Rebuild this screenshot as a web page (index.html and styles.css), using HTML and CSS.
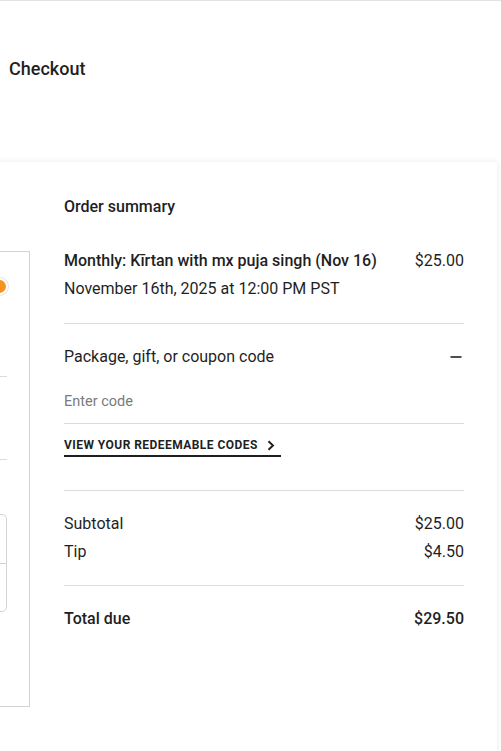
FILE: index.html
```html
<!DOCTYPE html>
<html lang="en">
<head>
<meta charset="utf-8">
<title>Checkout</title>
<link rel="stylesheet" href="styles.css">
</head>
<body>
<div class="topbar"></div>
<h1 class="page-title">Checkout</h1>
<main class="card">
  <section class="left-col">
    <div class="pay-box">
      <div class="radio-row"><span class="radio-dot"></span></div>
      <div class="pay-line pay-line-1"></div>
      <div class="pay-line pay-line-2"></div>
      <div class="card-input">
        <div class="card-input-top"></div>
        <div class="card-input-bottom"></div>
      </div>
    </div>
  </section>
  <section class="summary">
    <h2 class="summary-title">Order summary</h2>
    <div class="item">
      <div class="item-row">
        <span class="item-name">Monthly: Kīrtan with mx puja singh (Nov 16)</span>
        <span class="item-price">$25.00</span>
      </div>
      <div class="item-date">November 16th, 2025 at 12:00 PM PST</div>
    </div>
    <div class="coupon-row">
      <span>Package, gift, or coupon code</span>
      <svg class="minus" width="12" height="12" viewBox="0 0 12 12"><line x1="0.5" y1="6" x2="11.5" y2="6" stroke="#222" stroke-width="1.6"/></svg>
    </div>
    <div class="code-input">Enter code</div>
    <a class="redeem-link" href="#">VIEW YOUR REDEEMABLE CODES
      <svg class="chev" width="8" height="11" viewBox="0 0 8 11"><polyline points="1.5,1.2 6,5.5 1.5,9.8" fill="none" stroke="#1f1f1f" stroke-width="1.9"/></svg>
    </a>
    <div class="totals">
      <div class="total-row"><span>Subtotal</span><span>$25.00</span></div>
      <div class="total-row tip-row"><span>Tip</span><span>$4.50</span></div>
    </div>
    <div class="total-row grand"><span>Total due</span><span>$29.50</span></div>
  </section>
</main>
</body>
</html>
```
FILE: styles.css
```css
html, body {
  margin: 0;
  padding: 0;
  overflow: hidden;
  background: #ffffff;
  font-family: Roboto, "Liberation Sans", Arial, sans-serif;
  color: #1f1f1f;
}
.topbar {
  height: 0;
  border-bottom: 1px solid #e2e2e2;
}
.page-title {
  margin: 0;
  padding: 58px 0 0 9px;
  font-size: 18px;
  line-height: 20px;
  font-weight: 500;
  height: 103px;
  box-sizing: border-box;
}
.card {
  display: flex;
  margin: 0 0 0 -300px;
  width: 797px;
  min-height: 700px;
  background: #fff;
  box-shadow: 0 0 6px rgba(0,0,0,0.09);
  margin-top: 58px;
}
.left-col {
  flex: 1;
  padding: 89px 34px 0 0;
}
.pay-box {
  border: 1px solid #d3d3d3;
  border-left: none;
  height: 454px;
  padding: 0 22px 0 0;
  display: flex;
  flex-direction: column;
}
.radio-row {
  height: 60px;
  display: flex;
  justify-content: flex-end;
  align-items: flex-end;
}
.radio-dot {
  width: 13px;
  height: 13px;
  border-radius: 50%;
  background: #f7931e;
  margin-bottom: 19px;
  margin-right: 1px;
  box-shadow: 0 0 0 2px #fff, 0 0 0 3px #e6e6e6;
}
.pay-line {
  height: 1px;
  background: #dcdcdc;
  flex: none;
}
.pay-line-1 { margin-top: 64px; }
.pay-line-2 { margin-top: 82px; }
.card-input {
  margin-top: 54px;
  border: 1px solid #d3d3d3;
  border-radius: 5px;
  height: 96px;
  display: flex;
  flex-direction: column;
}
.card-input-top {
  height: 48px;
  border-bottom: 1px solid #d3d3d3;
}
.summary {
  width: 400px;
  flex: none;
  padding: 35px 33px 0 0;
}
.summary-title {
  margin: 0;
  font-size: 16px;
  line-height: 20px;
  font-weight: 500;
}
.item {
  margin-top: 34px;
  padding-bottom: 24px;
  border-bottom: 1px solid #dcdcdc;
}
.item-row {
  display: flex;
  justify-content: space-between;
  font-size: 16px;
  line-height: 20px;
}
.item-name { font-weight: 500; }
.item-date {
  margin-top: 8px;
  font-size: 16px;
  line-height: 20px;
}
.coupon-row {
  display: flex;
  justify-content: space-between;
  align-items: center;
  padding-top: 23px;
  font-size: 16px;
  line-height: 20px;
}
.minus { margin-right: 2px; }
.code-input {
  padding: 25px 0 11px;
  font-size: 14.5px;
  line-height: 20px;
  color: #7a7a7a;
  border-bottom: 1px solid #dcdcdc;
}
.redeem-link {
  display: inline-flex;
  align-items: center;
  gap: 9px;
  margin-top: 13px;
  padding: 0 6px 2px 0;
  border-bottom: 2px solid #1f1f1f;
  color: #1f1f1f;
  text-decoration: none;
  font-size: 12px;
  line-height: 16px;
  font-weight: 700;
  letter-spacing: 0.45px;
}
.totals {
  margin-top: 33px;
  border-top: 1px solid #dcdcdc;
  border-bottom: 1px solid #dcdcdc;
  padding: 23px 0 23px;
}
.total-row {
  display: flex;
  justify-content: space-between;
  font-size: 16px;
  line-height: 20px;
}
.tip-row { margin-top: 8px; }
.grand {
  padding-top: 23px;
  font-weight: 500;
}
```
